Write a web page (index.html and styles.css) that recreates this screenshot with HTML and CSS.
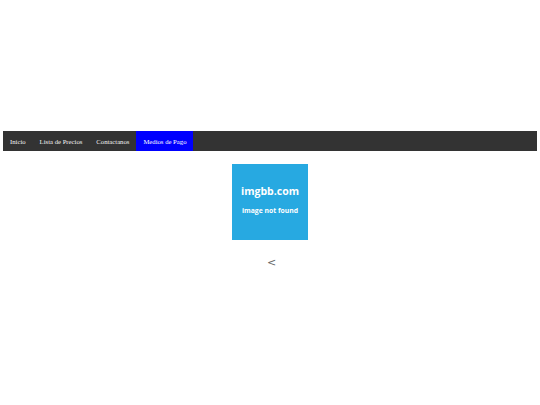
FILE: index.html
```html
<!DOCTYPE html>
<html lang="es">
<head>
    <meta charset="UTF-8">
    <meta name="viewport" content="width=device-width, initial-scale=1.0">
    <title>Medios de Pago</title>
    <link rel="stylesheet" href="styles.css">
</head>
<body>
    <header class="banner"></header>

    <nav class="topnav">
        <a href="#">Inicio</a>
        <a href="#">Lista de Precios</a>
        <a href="#">Contactanos</a>
        <a href="#" class="active">Medios de Pago</a>
    </nav>

    <main class="content">
        <div class="missing-img">
            <span class="brand">imgbb.com</span>
            <span class="note">image not found</span>
        </div>
        <a href="#" class="back">&lt;</a>
    </main>
</body>
</html>
```

FILE: styles.css
```css
* {
    box-sizing: border-box;
}

body {
    margin: 3px;
    background: #fff;
    font-family: 'Liberation Serif', 'Times New Roman', serif;
}

.banner {
    height: 128px;
}

.topnav {
    display: flex;
    background: #333;
    height: 20px;
}

.topnav a {
    display: flex;
    align-items: center;
    padding: 0 7px;
    color: #f2f2f2;
    text-decoration: none;
    font-size: 6.7px;
}

.topnav a.active {
    background: #0000ff;
    color: #fff;
}

.content {
    display: flex;
    flex-direction: column;
    align-items: center;
    padding-top: 13px;
}

.missing-img {
    width: 76px;
    height: 76px;
    background: #27a9e1;
    display: flex;
    flex-direction: column;
    align-items: center;
    justify-content: center;
    gap: 11px;
    padding-bottom: 3px;
    color: #fff;
    font-family: 'Open Sans', sans-serif;
    font-weight: 700;
}

.brand {
    font-size: 10.5px;
    line-height: 1;
}

.note {
    font-size: 6.8px;
    line-height: 1;
}

.back {
    margin-top: 16px;
    margin-left: 3px;
    color: #666;
    text-decoration: none;
    font-family: 'DejaVu Sans', sans-serif;
    font-size: 11px;
}
```
